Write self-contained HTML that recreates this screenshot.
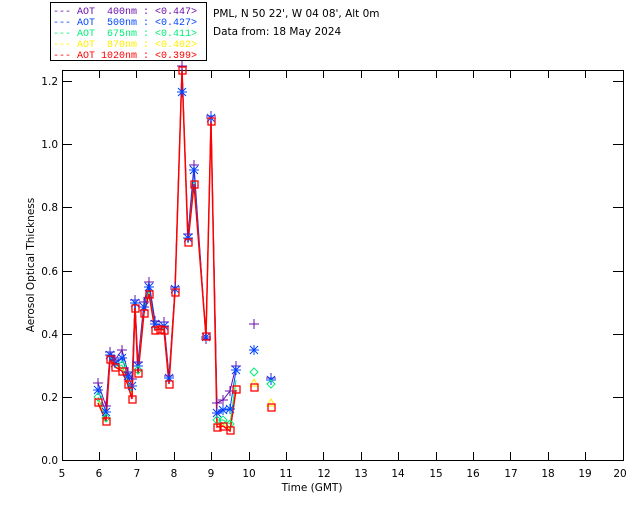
<!DOCTYPE html>
<html><head><style>
html,body{margin:0;padding:0;background:#fff;}
svg{display:block;font-family:"DejaVu Sans","Liberation Sans",sans-serif;}
</style></head><body>
<svg width="640" height="512" viewBox="0 0 640 512" xmlns="http://www.w3.org/2000/svg">
<defs>
<path id="pl" d="M0 -5v10M-5 0h10" fill="none" stroke="#6a0dad"/>
<path id="st" d="M-4 -4l8 8M4 -4l-8 8M0 -5v10M-5 0h10" fill="none" stroke="#0044ff"/>
<path id="dm" d="M0 -4l4 4-4 4-4-4z" fill="none" stroke="#00ee77"/>
</defs>
<rect width="640" height="512" fill="#fff"/>
<rect x="50.5" y="2.5" width="156" height="58" fill="none" stroke="#000"/>
<g font-size="10" font-family="Liberation Mono, monospace">
<text x="53" y="14" fill="#6a0dad" xml:space="preserve">--- AOT  400nm : &lt;0.447&gt;</text>
<text x="53" y="25" fill="#0044ff" xml:space="preserve">--- AOT  500nm : &lt;0.427&gt;</text>
<text x="53" y="36" fill="#00ee77" xml:space="preserve">--- AOT  675nm : &lt;0.411&gt;</text>
<text x="53" y="47" fill="#ffee00" xml:space="preserve">--- AOT  870nm : &lt;0.402&gt;</text>
<text x="53" y="58" fill="#ff0000" xml:space="preserve">--- AOT 1020nm : &lt;0.399&gt;</text>
</g>
<text x="213" y="17" font-size="10.5" fill="#000">PML, N 50 22', W 04 08', Alt 0m</text>
<text x="213" y="35" font-size="10.5" fill="#000">Data from: 18 May 2024</text>
<g stroke="#000" stroke-width="1" fill="none">
<polyline points="62.5,70 62.5,460.5 623.5,460.5 623.5,70"/>
<line x1="62" y1="70.5" x2="623" y2="70.5"/>
</g>
<g stroke="#000">
<path d="M62.5 460v-8M62.5 70v8M99.5 460v-8M99.5 70v8M136.5 460v-8M136.5 70v8M174.5 460v-8M174.5 70v8M211.5 460v-8M211.5 70v8M249.5 460v-8M249.5 70v8M286.5 460v-8M286.5 70v8M323.5 460v-8M323.5 70v8M361.5 460v-8M361.5 70v8M398.5 460v-8M398.5 70v8M436.5 460v-8M436.5 70v8M473.5 460v-8M473.5 70v8M510.5 460v-8M510.5 70v8M548.5 460v-8M548.5 70v8M585.5 460v-8M585.5 70v8"/>
<path d="M62 397.5h10M62 334.5h10M62 271.5h10M62 207.5h10M62 144.5h10M62 81.5h10M623 397.5h-10M623 334.5h-10M623 271.5h-10M623 207.5h-10M623 144.5h-10M623 81.5h-10"/>
</g>
<g font-size="10.5" fill="#000" text-anchor="middle">
<text x="62" y="477">5</text><text x="99" y="477">6</text><text x="137" y="477">7</text><text x="174" y="477">8</text><text x="211" y="477">9</text><text x="249" y="477">10</text><text x="286" y="477">11</text><text x="324" y="477">12</text><text x="361" y="477">13</text><text x="398" y="477">14</text><text x="436" y="477">15</text><text x="473" y="477">16</text><text x="511" y="477">17</text><text x="548" y="477">18</text><text x="585" y="477">19</text><text x="620" y="477">20</text>
<text x="312" y="491">Time (GMT)</text>
</g>
<g font-size="10.5" fill="#000" text-anchor="end">
<text x="58" y="464">0.0</text><text x="58" y="401">0.2</text><text x="58" y="338">0.4</text><text x="58" y="275">0.6</text><text x="58" y="211">0.8</text><text x="58" y="148">1.0</text><text x="58" y="85">1.2</text>
</g>
<text transform="translate(34,265) rotate(-90)" font-size="10.5" text-anchor="middle" fill="#000">Aerosol Optical Thickness</text>
<g fill="none" stroke-width="1">
<polyline stroke="#6a0dad" points="98,383 106,406 110,352 115,360 122,350 128,372 132,379 135,300 138,362 144,302 149,282 155,321 160,322 164,322 169,376 175,287 182,66 188,234 194,165 206,339 211,116 217,403 223,400 230,391 236,366"/>
<polyline stroke="#0044ff" points="98,390 106,412 110,355 115,363 122,358 128,376 132,386 135,303 138,366 144,307 149,287 155,324 160,325 164,326 169,378 175,289 182,68 188,238 194,170 206,337 211,118 217,413 223,410 230,409 236,370"/>
<polyline stroke="#00ee77" points="98,397 106,418 110,357 115,366 122,365 128,381 132,393 135,306 138,370 144,310 149,291 155,328 160,328 164,329 169,381 175,291 182,69 188,240 194,180 206,338 211,120 217,420 223,420 230,424 236,380"/>
<polyline stroke="#ffee00" points="98,401 106,420 110,358 115,367 122,369 128,384 132,397 135,307 138,372 144,312 149,293 155,330 160,329 164,330 169,383 175,292 182,70 188,241 194,183 206,336 211,121 217,425 223,424 230,429 236,388"/>
<polyline stroke="#ff0000" stroke-width="1.5" points="98,403 106,421 110,359 115,367 122,371 128,385 132,399 135,308 138,374 144,313 149,294 155,330 160,329 164,330 169,384 175,292 182,70 188,242 194,184 206,336 211,121 217,427 223,426 230,431 236,390"/>
</g>
<g>
<use href="#pl" x="98" y="383"/><use href="#pl" x="106" y="406"/><use href="#pl" x="110" y="352"/><use href="#pl" x="115" y="360"/><use href="#pl" x="122" y="350"/><use href="#pl" x="128" y="372"/><use href="#pl" x="132" y="379"/><use href="#pl" x="135" y="300"/><use href="#pl" x="138" y="362"/><use href="#pl" x="144" y="302"/><use href="#pl" x="149" y="282"/><use href="#pl" x="155" y="321"/><use href="#pl" x="164" y="322"/><use href="#pl" x="169" y="376"/><use href="#pl" x="175" y="287"/><use href="#pl" x="182" y="66"/><use href="#pl" x="188" y="234"/><use href="#pl" x="194" y="165"/><use href="#pl" x="206" y="339"/><use href="#pl" x="211" y="116"/><use href="#pl" x="217" y="403"/><use href="#pl" x="223" y="400"/><use href="#pl" x="230" y="391"/><use href="#pl" x="236" y="366"/><use href="#pl" x="254" y="324"/><use href="#pl" x="271" y="378"/>
<use href="#st" x="98" y="390"/><use href="#st" x="106" y="412"/><use href="#st" x="110" y="355"/><use href="#st" x="115" y="363"/><use href="#st" x="122" y="358"/><use href="#st" x="128" y="376"/><use href="#st" x="132" y="386"/><use href="#st" x="135" y="303"/><use href="#st" x="138" y="366"/><use href="#st" x="144" y="307"/><use href="#st" x="149" y="287"/><use href="#st" x="155" y="324"/><use href="#st" x="164" y="326"/><use href="#st" x="169" y="378"/><use href="#st" x="175" y="289"/><use href="#st" x="182" y="92"/><use href="#st" x="188" y="238"/><use href="#st" x="194" y="170"/><use href="#st" x="206" y="337"/><use href="#st" x="211" y="118"/><use href="#st" x="217" y="413"/><use href="#st" x="223" y="410"/><use href="#st" x="230" y="409"/><use href="#st" x="236" y="370"/><use href="#st" x="254" y="350"/><use href="#st" x="271" y="380"/>
<use href="#dm" x="98" y="397"/><use href="#dm" x="106" y="418"/><use href="#dm" x="122" y="365"/><use href="#dm" x="138" y="370"/><use href="#dm" x="217" y="420"/><use href="#dm" x="223" y="420"/><use href="#dm" x="230" y="424"/><use href="#dm" x="254" y="372"/><use href="#dm" x="271" y="384"/>
</g>
<g fill="none" stroke="#ffee00">
<path d="M254 379l4 7h-8zM271 399l4 7h-8z"/>
</g>
<g fill="none" stroke="#ff0000" stroke-width="1.3">
<rect x="95" y="399" width="7" height="7"/><rect x="103" y="418" width="7" height="7"/><rect x="107" y="356" width="7" height="7"/><rect x="112" y="364" width="7" height="7"/><rect x="119" y="368" width="7" height="7"/><rect x="125" y="381" width="7" height="7"/><rect x="129" y="396" width="7" height="7"/><rect x="132" y="305" width="7" height="7"/><rect x="135" y="370" width="7" height="7"/><rect x="141" y="310" width="7" height="7"/><rect x="146" y="291" width="7" height="7"/><rect x="152" y="327" width="7" height="7"/><rect x="157" y="326" width="7" height="7"/><rect x="161" y="327" width="7" height="7"/><rect x="166" y="381" width="7" height="7"/><rect x="172" y="289" width="7" height="7"/><rect x="179" y="67" width="7" height="7"/><rect x="185" y="239" width="7" height="7"/><rect x="191" y="181" width="7" height="7"/><rect x="203" y="333" width="7" height="7"/><rect x="208" y="118" width="7" height="7"/><rect x="214" y="424" width="7" height="7"/><rect x="220" y="423" width="7" height="7"/><rect x="227" y="427" width="7" height="7"/><rect x="233" y="386" width="7" height="7"/><rect x="251" y="384" width="7" height="7"/><rect x="268" y="404" width="7" height="7"/>
</g>
</svg>
</body></html>
